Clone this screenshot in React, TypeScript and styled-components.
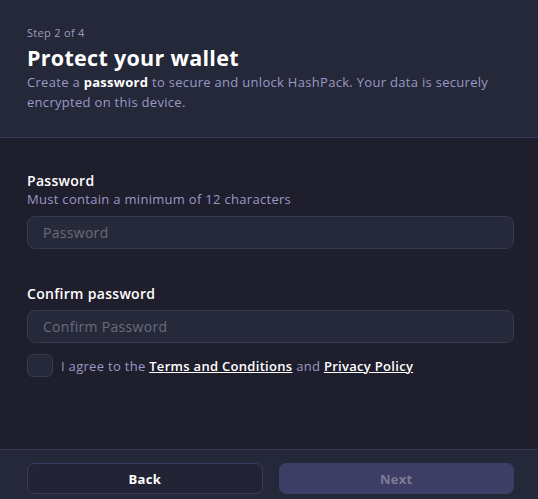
import React from "react";
import styled, { createGlobalStyle } from "styled-components";

const GlobalStyle = createGlobalStyle`
  html, body {
    margin: 0;
    padding: 0;
    background: #1f1e2c;
  }
  body {
    font-family: "Open Sans", "DejaVu Sans", sans-serif;
    letter-spacing: 0.3px;
  }
  * {
    box-sizing: border-box;
  }
`;

const Page = styled.div`
  width: 538px;
  height: 499px;
  display: flex;
  flex-direction: column;
  background: #1f1e2c;
  color: #ffffff;
`;

const Header = styled.header`
  height: 138px;
  padding: 26px 24px 0 27px;
  background: #252838;
  border-bottom: 1px solid #3a3a5e;
`;

const StepLabel = styled.div`
  font-size: 11px;
  line-height: 14px;
  color: #9e9cbf;
`;

const Title = styled.h1`
  margin: 4px 0 0;
  font-size: 21.5px;
  line-height: 28px;
  font-weight: 700;
  color: #ffffff;
`;

const Description = styled.p`
  margin: 0;
  font-size: 13px;
  line-height: 20px;
  color: #9a98c7;

  strong {
    color: #ffffff;
    font-weight: 700;
  }
`;

const Body = styled.main`
  flex: 1;
  padding: 34px 24px 0 27px;
  display: flex;
  flex-direction: column;
`;

const Field = styled.div`
  display: flex;
  flex-direction: column;
  margin-bottom: 36px;
`;

const Label = styled.label`
  font-size: 14px;
  line-height: 18px;
  font-weight: 600;
  color: #ffffff;
  margin-bottom: 7px;
`;

const Hint = styled.div`
  font-size: 13px;
  line-height: 16px;
  color: #9a98c7;
  margin-top: -6px;
  margin-bottom: 9px;
`;

const Input = styled.input`
  height: 33px;
  width: 100%;
  padding: 0 15px;
  border: 1px solid #373a4f;
  border-radius: 8px;
  background: #262939;
  font-family: inherit;
  letter-spacing: 0.3px;
  font-size: 14px;
  color: #ffffff;
  outline: none;

  &::placeholder {
    color: #6a6b7c;
  }
`;

const AgreeRow = styled.div`
  display: flex;
  align-items: center;
  gap: 8px;
  margin-top: -25px;
`;

const CheckBox = styled.span`
  width: 26px;
  height: 23px;
  border: 1px solid #373a4f;
  border-radius: 6px;
  background: #262939;
`;

const AgreeText = styled.span`
  font-size: 13px;
  color: #9a98c7;
`;

const Link = styled.a`
  color: #ffffff;
  font-weight: 600;
  text-decoration: underline;
`;

const Footer = styled.footer`
  height: 50px;
  padding: 13px 24px 0 27px;
  background: #252838;
  border-top: 1px solid #34365a;
  display: grid;
  grid-template-columns: 1fr 1fr;
  gap: 16px;
  align-items: start;
`;

const Button = styled.button<{ $primary?: boolean }>`
  height: 31px;
  border-radius: 7px;
  font-family: inherit;
  letter-spacing: 0.3px;
  font-size: 13px;
  font-weight: 700;
  border: 1px solid ${p => (p.$primary ? "#3d3d66" : "#3a3a60")};
  background: ${p => (p.$primary ? "#3d3d66" : "#222436")};
  color: ${p => (p.$primary ? "#7c7c95" : "#ffffff")};
`;

export default function App() {
  return (
    <Page>
      <GlobalStyle />
      <Header>
        <StepLabel>Step 2 of 4</StepLabel>
        <Title>Protect your wallet</Title>
        <Description>
          Create a <strong>password</strong> to secure and unlock HashPack. Your data is securely
          encrypted on this device.
        </Description>
      </Header>
      <Body>
        <Field>
          <Label>Password</Label>
          <Hint>Must contain a minimum of 12 characters</Hint>
          <Input type="password" placeholder="Password" />
        </Field>
        <Field>
          <Label>Confirm password</Label>
          <Input type="password" placeholder="Confirm Password" />
        </Field>
        <AgreeRow>
          <CheckBox />
          <AgreeText>
            I agree to the <Link>Terms and Conditions</Link> and <Link>Privacy Policy</Link>
          </AgreeText>
        </AgreeRow>
      </Body>
      <Footer>
        <Button>Back</Button>
        <Button $primary disabled>Next</Button>
      </Footer>
    </Page>
  );
}
